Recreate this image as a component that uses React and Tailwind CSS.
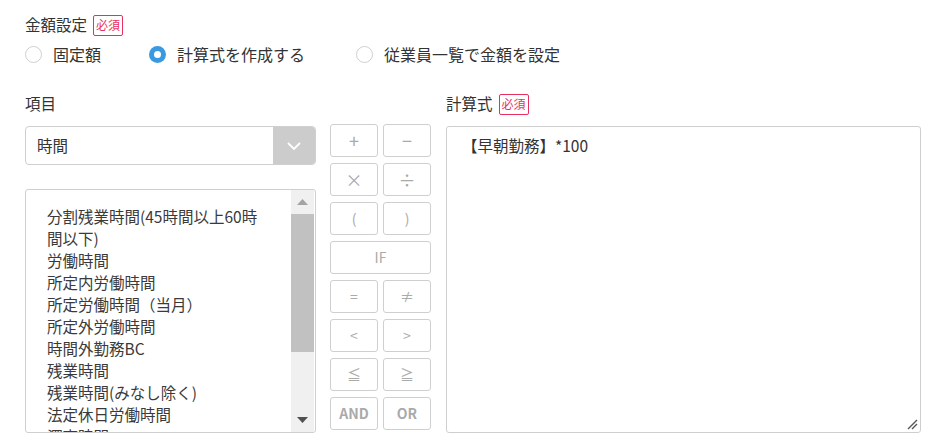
import React from "react";

const font = { fontFamily: '"Noto Sans CJK JP", "Noto Sans", sans-serif' };

function Badge() {
  return (
    <span className="inline-flex items-center justify-center border border-[#e8305f] text-[#e8305f] text-[12px] leading-none rounded-[2px] px-[2px] h-[21px] ml-[6px]">
      必須
    </span>
  );
}

function Radio({ checked, label, className = "" }) {
  return (
    <div className={"flex items-center " + className}>
      {checked ? (
        <span className="w-[17px] h-[17px] rounded-full bg-[#3b99e0] flex items-center justify-center">
          <span className="w-[7px] h-[7px] rounded-full bg-white" />
        </span>
      ) : (
        <span className="w-[17px] h-[17px] rounded-full border border-[#cfcfcf] bg-white" />
      )}
      <span className="ml-[11px] text-[16px] text-[#333]">{label}</span>
    </div>
  );
}

function OpBtn({ children, wide, className = "" }) {
  return (
    <div
      className={
        "h-[33px] border border-[#cfcfcf] rounded-[3px] flex items-center justify-center text-[#aaa] text-[14px] " +
        (wide ? "w-[101px] " : "w-[48px] ") +
        className
      }
    >
      {children}
    </div>
  );
}

const items = [
  "分割残業時間(45時間以上60時間以下)",
  "労働時間",
  "所定内労働時間",
  "所定労働時間（当月）",
  "所定外労働時間",
  "時間外勤務BC",
  "残業時間",
  "残業時間(みなし除く)",
  "法定休日労働時間",
  "深夜時間",
];

export default function App() {
  return (
    <div className="w-[937px] h-[442px] bg-white overflow-hidden text-[#333]" style={font}>
      <div className="pl-[25px] pt-[13px]">
        <div className="flex items-center h-[24px]">
          <span className="text-[15.5px]">金額設定</span>
          <Badge />
        </div>
        <div className="flex items-center mt-[5px] h-[24px]">
          <Radio label="固定額" />
          <Radio checked label="計算式を作成する" className="ml-[48px]" />
          <Radio label="従業員一覧で金額を設定" className="ml-[51px]" />
        </div>
      </div>

      <div className="flex pl-[25px] mt-[27px]">
        {/* left column */}
        <div className="w-[291px]">
          <div className="text-[15.5px] h-[24px] flex items-center mt-[-1px]">項目</div>
          <div className="mt-[10px] h-[39px] border border-[#cfcfcf] rounded-[4px] flex overflow-hidden">
            <div className="flex-1 flex items-center pl-[11px] text-[15.5px]">時間</div>
            <div className="w-[42px] bg-[#cccccc] flex items-center justify-center">
              <svg width="16" height="10" viewBox="0 0 16 10">
                <path d="M2 2 L8 8 L14 2" fill="none" stroke="#fff" strokeWidth="1.8" />
              </svg>
            </div>
          </div>
          <div className="mt-[24px] h-[244px] border border-[#cfcfcf] rounded-[3px] flex overflow-hidden">
            <div className="flex-1 overflow-hidden pl-[21px] pt-[15px]">
              <div className="w-[220px] text-[15.5px] leading-[22px] text-[#3a3a3a]">
                {items.map((t) => (
                  <div key={t}>{t}</div>
                ))}
              </div>
            </div>
            <div className="w-[23px] bg-[#f0f0f0] flex flex-col items-center mr-[1px]">
              <div className="h-[24px] flex items-center justify-center">
                <svg width="11" height="6" viewBox="0 0 11 6">
                  <path d="M0 6 L5.5 0 L11 6 Z" fill="#a3a3a3" />
                </svg>
              </div>
              <div className="w-full h-[138px] bg-[#c1c1c1]" />
              <div className="flex-1" />
              <div className="h-[24px] flex items-center justify-center">
                <svg width="11" height="6" viewBox="0 0 11 6">
                  <path d="M0 0 L5.5 6 L11 0 Z" fill="#505050" />
                </svg>
              </div>
            </div>
          </div>
        </div>

        {/* buttons */}
        <div className="ml-[14px] mt-[31px] flex flex-col gap-[6px]">
          <div className="flex gap-[5px]">
            <OpBtn className="text-[18px]">+</OpBtn>
            <OpBtn className="text-[18px]">−</OpBtn>
          </div>
          <div className="flex gap-[5px]">
            <OpBtn className="text-[17px]">×</OpBtn>
            <OpBtn className="text-[17px]">÷</OpBtn>
          </div>
          <div className="flex gap-[5px]">
            <OpBtn>(</OpBtn>
            <OpBtn>)</OpBtn>
          </div>
          <OpBtn wide>IF</OpBtn>
          <div className="flex gap-[5px]">
            <OpBtn>=</OpBtn>
            <OpBtn>≠</OpBtn>
          </div>
          <div className="flex gap-[5px]">
            <OpBtn>&lt;</OpBtn>
            <OpBtn>&gt;</OpBtn>
          </div>
          <div className="flex gap-[5px]">
            <OpBtn>≦</OpBtn>
            <OpBtn>≧</OpBtn>
          </div>
          <div className="flex gap-[5px]">
            <OpBtn className="font-bold">AND</OpBtn>
            <OpBtn className="font-bold">OR</OpBtn>
          </div>
        </div>

        {/* formula */}
        <div className="ml-[15px] w-[475px]">
          <div className="flex items-center h-[24px] mt-[-1px]">
            <span className="text-[15.5px]">計算式</span>
            <Badge />
          </div>
          <div className="relative mt-[10px] h-[307px] border border-[#cfcfcf] rounded-[3px] pl-[15px] pt-[7px] text-[15.5px]">
            【早朝勤務】*100
            <svg className="absolute right-[2px] bottom-[2px]" width="12" height="12" viewBox="0 0 12 12">
              <path d="M11 2 L2 11 M11 6 L6 11" stroke="#555" strokeWidth="1.4" />
            </svg>
          </div>
        </div>
      </div>
    </div>
  );
}
